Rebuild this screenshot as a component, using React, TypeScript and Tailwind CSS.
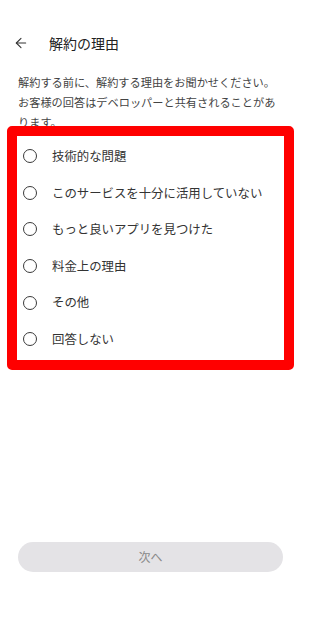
import { ArrowLeft } from "lucide-react";

const reasons = [
  "技術的な問題",
  "このサービスを十分に活用していない",
  "もっと良いアプリを見つけた",
  "料金上の理由",
  "その他",
  "回答しない",
];

export default function App() {
  return (
    <div
      className="w-[301px] h-[619px] bg-white flex flex-col text-[#222]"
      style={{ fontFamily: '"Noto Sans CJK JP", "Noto Sans", sans-serif' }}
    >
      {/* Header */}
      <div className="flex items-center h-6 mt-[31px] pl-[13px]">
        <ArrowLeft className="w-[16px] h-[16px] text-[#333]" strokeWidth={1.6} />
        <h1 className="ml-[20px] text-[14px] text-[#222]">解約の理由</h1>
      </div>

      {/* Description */}
      <p className="mt-[17px] px-[18px] text-[11.2px] leading-[20px] text-[#444]">
        解約する前に、解約する理由をお聞かせください。お客様の回答はデベロッパーと共有されることがあります。
      </p>

      {/* Reasons (highlighted) */}
      <div className="relative z-10 -mt-[6px] mx-[7px] border-[10px] border-[#ff0000] rounded-[5px] bg-white py-[2px]">
        {reasons.map((reason) => (
          <label key={reason} className="flex items-center h-[36.6px] pl-[6px] cursor-pointer">
            <span className="w-[14px] h-[14px] rounded-full border-[1.7px] border-[#3a3a3a] shrink-0" />
            <span className="ml-[15px] text-[12.4px] text-[#333]">{reason}</span>
          </label>
        ))}
      </div>

      <div className="flex-1" />

      {/* Next button */}
      <div className="px-[18px] mb-[47px]">
        <button
          disabled
          className="w-full h-[30px] rounded-full bg-[#e4e3e6] text-[12px] text-[#8a8a8a]"
        >
          次へ
        </button>
      </div>
    </div>
  );
}
